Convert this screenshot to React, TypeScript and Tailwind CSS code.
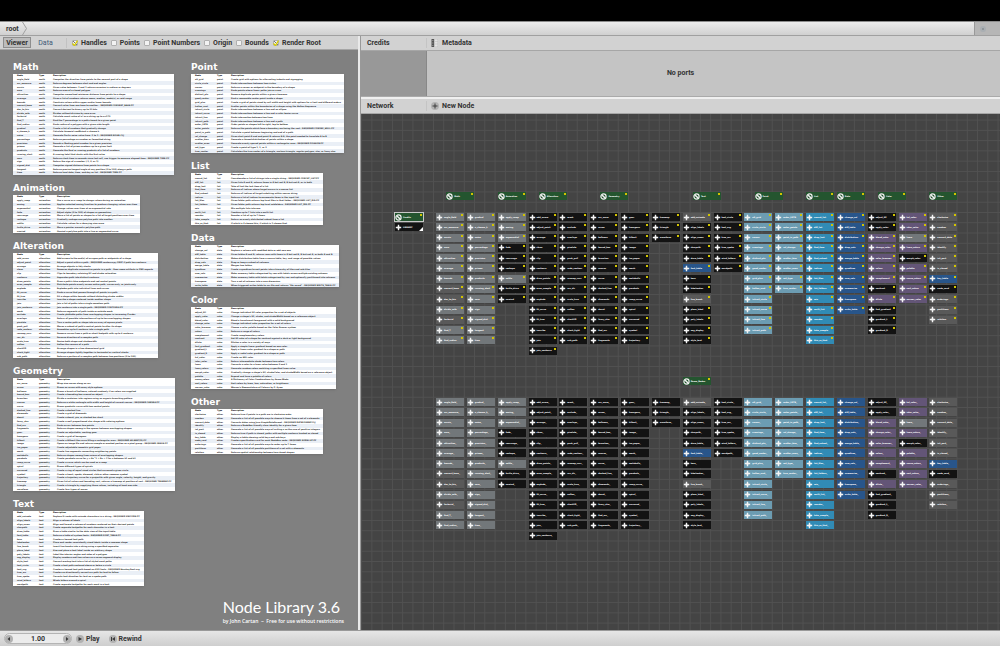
import type { ReactNode } from 'react'

type Tone = 'ash' | 'stone' | 'ink' | 'sky' | 'cyan' | 'navy' | 'plum' | 'green'
type Entry = [name: string, description: string, tone?: Tone]

interface Section {
  title: string
  type: string
  tone: Tone
  height: string
  width: string
  wideType?: boolean
  cell: number // grid cell of the green subnetwork header
  columns: number[] // how many nodes sit in each network column
  entries: Entry[]
}

const toneClass: Record<Tone, string> = {
  ash: 'bg-[#72777a]',
  stone: 'bg-[#595959]',
  ink: 'bg-[#131313]',
  sky: 'bg-[#6c9cb2]',
  cyan: 'bg-[#318bb5]',
  navy: 'bg-[#28558a]',
  plum: 'bg-[#635577]',
  green: 'bg-[#24552f]',
}

const leftSections: Section[] = [
  {
    title: 'Math', type: 'math', tone: 'ash', height: 'h-[101px]', width: 'w-[161px]', cell: 1, columns: [13, 13],
    entries: [
      ['angle_field', 'Computes the direction from points to the nearest part of a shape'],
      ['arc_measure', 'Returns degrees between start and end angles'],
      ['arcsin', 'Given value between -1 and 1 returns arcosine in radians or degrees'],
      ['area', 'Returns area of a closed polygon'],
      ['attraction', 'Computes normalized minimum distance from points to a shape'],
      ['average', 'Given a list of numbers returns mean, median, mode(s), or mid-range'],
      ['bounds', 'Constrain values within upper and/or lower bounds'],
      ['convert_base', 'Convert value from one base to another - REQUIRED CONVERT_BASE.PY', 'stone'],
      ['dec_to_bin', 'Convert decimal to binary up to 32 bits', 'stone'],
      ['divide_safe', 'Divides without division by zero error'],
      ['factorial', 'Calculate exact value of n! as a string up to n=170', 'stone'],
      ['find_T', 'Find the T percentage in a path closest to a given point'],
      ['find_radius', 'Finds radius of a polygon with a given side length'],
      ['gradual', 'Create a list of numbers that gradually change'],
      ['n_choose_k', 'Calculate binomial coefficient n choose k'],
      ['noise', 'Generate Perlin noise value from -1 to 1 - REQUIRED NOISE.CLJ'],
      ['percentage', 'Returns percentage as number or formatted string'],
      ['precision', 'Rounds a floating point number to a given precision'],
      ['primes', 'Generate a list of prime numbers up to a given limit'],
      ['products', 'Generate the final or running products of a list of numbers'],
      ['running_start', 'A running total that starts with the first value'],
      ['secs', 'Returns clock time in seconds since last call, use trigger to measure elapsed time - REQUIRED TIME.PY'],
      ['sign', 'Return the sign of a number (-1, 0, or 1)'],
      ['signed_dist', 'Computes signed distance from points to a shape'],
      ['tangent', 'Returns precise tangent angle at any position (0 to 100) along a path'],
      ['time', 'Returns local date, time, and day as list - REQUIRED TIME.PY'],
    ],
  },
  {
    title: 'Animation', type: 'animation', tone: 'ink', height: 'h-[38px]', width: 'w-[127px]', wideType: true, cell: 6, columns: [9],
    entries: [
      ['apply_ramp', 'Use a curve as a ramp to change values during an animation', 'ash'],
      ['easing', 'Applies selected easing function to produce changing values over time', 'ash'],
      ['exponential', 'Change values over time at an exponential rate', 'ash'],
      ['fade', 'Adjust alpha (0 to 100) of shapes or geometries'],
      ['rearrange', 'Move a list of points or shapes to a list of target positions over time'],
      ['reshape', 'Gradually reshape one polyline path into another'],
      ['settle', 'Calculate values for a decaying sine wave', 'ash'],
      ['turtle_drive', 'Move a pointer around a polyline path'],
      ['unwind', 'Unwind a polyline path into a line or segmented curve'],
    ],
  },
  {
    title: 'Alteration', type: 'alteration', tone: 'ink', height: 'h-[105px]', width: 'w-[145px]', wideType: true, cell: 10, columns: [14, 13],
    entries: [
      ['add_arrow', 'Add arrows to the end(s) of an open path or midpoints of a shape'],
      ['adjust_point', 'Adjust a point within a path - REQUIRED contours.py ONLY if path has contours'],
      ['arrange', 'Arrange objects in tidy stacks'],
      ['clean', 'Removes duplicate consecutive points in a path - fixes some artifacts in PNG exports'],
      ['clip', 'Clips to boundary retaining fill and stroke coloration'],
      ['contours', 'Separates path into distinct contours'],
      ['draw_points', "Draw a path's blue endpoints and red control points"],
      ['even_sample', 'Distribute points evenly across entire path, curves only, or joints only'],
      ['explode', 'Explodes path into individual lines and curves'],
      ['fit_curve', 'Finds a curve that passes through all points in a path'],
      ['fit_true', 'Fit a shape within bounds without distorting stroke widths'],
      ['inscribe', 'Inscribe a shape centered inside another shape'],
      ['join', 'Join a list of paths into a single seamless path'],
      ['join_contours', 'Join contours into a single path - REQUIRED CONTOURS.PY'],
      ['mask', 'Returns segments of path inside or outside mask'],
      ['occlude', 'Create plottable paths from overlapping shapes in increasing Z order'],
      ['overlaps', 'Return all possible intersections of up to ten overlapping shapes'],
      ['pixelate', 'Turn a vector path or shape into an array of square pixels'],
      ['push_pull', "Moves a subset of path's control points to alter its shape"],
      ['redo_contour', 'Assembles up to 6 contours into a single path'],
      ['resamp_curv', 'Remove curves from a path or short footpath with up to 6 contours'],
      ['rev_dir', 'Reverse direction of a complex path'],
      ['scale_true', 'Resize both shape and strokewidth'],
      ['soften', 'Soften the corners of a path'],
      ['stack2D', 'Arrange shapes in a two dimensional grid'],
      ['stack_tight', 'Arrange shapes tightly together in horizontal or vertical stacks'],
      ['sub_path', 'Returns a portion of a complex path between two positions (0 to 100)'],
    ],
  },
  {
    title: 'Geometry', type: 'geometry', tone: 'ink', height: 'h-[113px]', width: 'w-[162px]', wideType: true, cell: 16, columns: [13, 13, 3],
    entries: [
      ['arc_wave', 'Wrap sine waves along an arc'],
      ['arrow', 'Draws an arrow with many style options'],
      ['balloons', 'Draws a bunch of balloons, colored randomly if no colors are supplied'],
      ['bound_box', 'Create a bounding box around an object'],
      ['branches', 'Divide a container into regions using an organic branching pattern'],
      ['canvas', 'Returns a white rectangle with width and height of current canvas - REQUIRED CANVAS.PY'],
      ['curve', 'Draws quadratic curve with two control points'],
      ['dashed_line', 'Create a dashed line'],
      ['diamonds', 'Create a grid of diamonds'],
      ['donut', 'Create a donut, pie, or stacked bar chart'],
      ['fancy_star', 'Create a well proportioned star shape with coloring options'],
      ['find_arc', 'Finds an arc between two points'],
      ['fragments', 'Returns shapes among in the spaces between overlapping shapes'],
      ['gear', 'Create an adjustable, working gear'],
      ['hexagons', 'Create a grid of hexagons'],
      ['hilbert', 'Create a Hilbert-like curve filling a rectangular area - REQUIRED HILBERT(D).PY'],
      ['image', 'Opens an image file and returns sample or masked portion as a pixel group - REQUIRED IMAGE.PY'],
      ['iso_paper', 'Create adjustable isometric grid paper'],
      ['mesh', 'Create line segments connecting neighboring points'],
      ['metaballs', 'Returns shapes among from unions of overlapping shapes'],
      ['parabola', 'Create parabola curve for y = Ax^2 + Bx + C for x between h1 and h2'],
      ['ramp_curve', 'Create a curve which can be used as a ramp'],
      ['spiral', 'Draws different types of spirals'],
      ['surround', 'Create a ring of equal-sized circles that surround a given circle'],
      ['symbol', 'Create a heart, spade, diamond, club or other common symbol'],
      ['trajectory', 'Create a trajectory curve for a projectile with given angle, velocity, height, and gravity'],
      ['treemap', 'Given list of values and bounding rect, returns a treemap at position of rect - REQUIRED TREEMAP.PY'],
      ['triangle', 'Create a triangle by supplying three values, including at least one side'],
      ['waveform', 'Create four types of waves'],
    ],
  },
  {
    title: 'Text', type: 'text', tone: 'ink', height: 'h-[75px]', width: 'w-[131px]', cell: 25, columns: [13, 6],
    entries: [
      ['add_unicode', 'Replace U+code with unicode characters in a string - REQUIRED UNICODE.PY', 'stone'],
      ['align_labels', 'Align a column of labels'],
      ['align_nums', 'Align and format a column of numbers centered on their decimal points'],
      ['charpath', 'Create separate textpaths for each character in a text'],
      ['draw_table', 'Draw a table similar to the data view of the input table'],
      ['font_table', 'Returns a table of system fonts - REQUIRED FONT_TABLE.PY', 'navy'],
      ['kern', 'Creates a kerned text path'],
      ['labelmaker', 'Place and render consistently sized labels inside a common shape'],
      ['line_break', 'Insert line breaks into a string using a specified separator', 'stone'],
      ['place_label', 'Size and place a text label inside an arbitrary shape'],
      ['poly_labels', 'Label the interior angles and sides of a polygon'],
      ['seg_display', 'Display numbers and two values as a seven-segment display'],
      ['style_text', 'Convert markup text into a list of styled word paths'],
      ['text_circle', 'Create a text path centered above or below a circle'],
      ['text_svg', 'Creates a kerned text path based on SVG fonts - REQUIRED HersheyFont.svg'],
      ['true_arc', 'Creates an directionally correct arc path for text to follow'],
      ['true_spoke', 'Corrects text direction for text on a spoke path'],
      ['wind_letters', 'Winds letters around a spiral'],
      ['wordpath', 'Create separate textpaths for each word in a text'],
    ],
  },
]

const rightSections: Section[] = [
  {
    title: 'Point', type: 'point', tone: 'sky', height: 'h-[79px]', width: 'w-[153px]', cell: 31, columns: [12, 8],
    entries: [
      ['alt_grid', 'Create grid with options for alternating indents and zigzagging'],
      ['circle_circle', 'Finds intersections between two circles'],
      ['corner', 'Returns a corner or midpoint in the boundary of a shape'],
      ['crossings', 'Finds points where linear paths join or cross'],
      ['distinct_pts', 'Remove duplicate points within a given closeness'],
      ['good_center', 'Find a reasonable center point inside a shape'],
      ['grid_plus', 'Create a grid of points sized by cell width and height with options for a limit and different orders'],
      ['halton_scat', 'Scatter points within the boundaries of a shape using the Halton Sequence'],
      ['intrsct_circle', 'Finds intersections between a line and an ellipse'],
      ['intrsct_curve', 'Finds intersections between a line and a cubic bezier curve'],
      ['intrsct_line', 'Finds intersection between two lines'],
      ['intrsct_path', 'Finds intersections between a line and a path'],
      ['order_LRTB', 'Order points or shapes left to right, top to bottom'],
      ['outer_points', 'Returns the points which form a boundary enclosing the rest - REQUIRED CONVEX_HULL.PY'],
      ['point_in_path', 'Calculate a point between beginning and end of a path'],
      ['rel_change', 'Given start point A and end point B returns B-A, the point needed to translate A to B'],
      ['scatter_bias', 'Generate a biased distribution of points within a shape'],
      ['scatter_even', 'Generate evenly spaced points within a rectangular area - REQUIRED POISSON.PY'],
      ['set_type', 'Create a point of type 1, 2, or 3'],
      ['true_center', 'Calculates the true center of a triangle, nucleus triangle, regular polygon, star, or fancy star'],
    ],
  },
  {
    title: 'List', type: 'list', tone: 'cyan', height: 'h-[52px]', width: 'w-[132px]', cell: 36, columns: [13],
    entries: [
      ['concat_list', 'Concatenates a list of strings into a single string - REQUIRED CONCAT_LIST.PY'],
      ['diff_list', 'Given lists A and B, returns items in A but not B, B but not A, or in both'],
      ['drop_last', 'Take all but the last item of a list'],
      ['find_item', 'Returns all indices where target occurs in a source list'],
      ['find_subset', 'Returns all indices of target substring within source string'],
      ['indices', 'Returns a list of indices to enumerate items in the input list'],
      ['list_files', 'Given folder path returns top level files in that folder - REQUIRED LIST_DIR.PY'],
      ['list_folders', 'Given folder path returns top level subfolders - REQUIRED LIST_DIR.PY'],
      ['mix', 'Mix multiple lists into one'],
      ['multi_list', 'Combine up to 7 lists into a multi-list'],
      ['reorder', 'Reorder a list of up to 7 items'],
      ['take_sample', 'Return an evenly distributed subset from a list'],
      ['this_or_that', 'If which is 0 choose this, if which is 1 choose that'],
    ],
  },
  {
    title: 'Data', type: 'data', tone: 'navy', height: 'h-[42px]', width: 'w-[148px]', cell: 39, columns: [10],
    entries: [
      ['change_col', 'Replace a column with modified data or add new one'],
      ['diff_table', 'Given tables A and B, returns rows with items in A but not B, B but not A, or both A and B'],
      ['distribution', 'Makes distribution table from a source table, key, and range of possible values'],
      ['drop_cols', 'Drop or keep a subset of columns'],
      ['merge_table', 'Merges two tables'],
      ['quadtree', 'Create a quadtree to sort points into a hierarchy of tiles and sub-tiles'],
      ['sum_cols', 'Make summary table categorized by row with totals across multiple existing columns'],
      ['summarize', 'Make summary table with totals categorized by row and optionally partitioned into columns'],
      ['transpose', 'Turn a set of columns into a new dimension'],
      ['write_table', 'When triggered writes table to csv file and returns "file saved" - REQUIRED WRITE_TABLE.PY'],
    ],
  },
  {
    title: 'Color', type: 'color', tone: 'plum', height: 'h-[82px]', width: 'w-[145px]', cell: 43, columns: [12, 9],
    entries: [
      ['adjust_fill', 'Change individual fill color properties for a set of objects', 'ink'],
      ['apply_color', "Change a shape's fill, stroke, and strokeWidth based on a reference object", 'ink'],
      ['blend_color', 'Blend a translucent foreground with a solid background'],
      ['change_color', 'Change individual color properties for a set of colors'],
      ['color_browser', 'Choose a color palette based on the Color Brewer system'],
      ['colors', 'Returns a range of colors'],
      ['complement', 'Create complementary colors'],
      ['contrast', 'Set fill color of a shape for contrast against a dark or light background', 'ink'],
      ['dilute', 'Dilutes a color in a variety of ways'],
      ['fast_gradient', 'Apply a simple linear gradient based on one color', 'ink'],
      ['gradient_L', 'Apply a linear color gradient to a shape or path', 'ink'],
      ['gradient_R', 'Apply a radial color gradient to a shape or path', 'ink'],
      ['hsl_color', 'Create an HSL color'],
      ['inter_color', 'Return intermediate shade between two colors'],
      ['luma', 'Converts a color to a luma value between 0 and 1', 'ash'],
      ['luma_colors', 'Generate random colors matching a specified luma value'],
      ['morph_color', "Gradually change a shape's fill, strokeColor, and strokeWidth based on a reference object", 'ink'],
      ['palette', 'Expand and tune a palette of colors'],
      ['sanzo_colors', 'A Dictionary of Color Combinations by Sanzo Wada'],
      ['sort_colors', 'Sort colors by luma, hue, saturation, or brightness'],
      ['werner_color', "Werner's Nomenclature of Colours by P. Syme"],
    ],
  },
  {
    title: 'Other', type: 'other', tone: 'stone', height: 'h-[45px]', width: 'w-[132px]', cell: 48, columns: [11],
    entries: [
      ['clockwise', 'Returns true if points in a path are in clockwise order'],
      ['combos', 'Generate a list of all possible ways to choose k items from a set of n elements'],
      ['convert_date', 'Converts dates using Java SimpleDateFormat - REQUIRED DATEFORMAT.CLJ'],
      ['identify', 'Returns a NodeBox-friendly class identity for a given item'],
      ['int_part', 'Generate a list of all possible ways of writing n as the sum of positive integers'],
      ['is_closed', 'Returns true if path is closed, paths with multiple contours treated as closed'],
      ['key_table', 'Display a table showing valid keys and sub-keys', 'navy'],
      ['node_card', 'Creates specification card for each NodeBox node - REQUIRED NODELIST.PY', 'ink'],
      ['orderings', 'Generate a list of all possible ways to order up to 7 items'],
      ['partitions', 'Generate a list of all possible partitions of a set with n elements'],
      ['relation', 'Returns spatial relationship between two closed shapes'],
    ],
  },
]

// Size of one network grid cell at the current zoom level
const CELL = 185 / 18
const ORIGIN_X = 75
const ORIGIN_Y = 99

interface NodeSpec {
  name: string
  x: number
  y: number
  tone: Tone
  ported?: boolean
  selected?: boolean
  rendered?: boolean
}

function layoutNodes(): NodeSpec[] {
  const nodes: NodeSpec[] = [
    { name: 'Credits', x: -4, y: 0, tone: 'green', ported: true, selected: true },
    { name: 'LIBRARY', x: -4, y: 1, tone: 'ink', rendered: true },
    { name: 'Demo_Nodes', x: 24, y: 16, tone: 'green', ported: true },
  ]
  let column = 0
  for (const section of [...leftSections, ...rightSections]) {
    nodes.push({ name: section.title, x: section.cell, y: -2, tone: 'green', ported: true })
    let index = 0
    for (const count of section.columns) {
      for (let row = 0; row < count; row++) {
        const [name, , tone = section.tone] = section.entries[index++]
        nodes.push({ name, x: column * 3, y: row, tone, ported: true })
        nodes.push({ name: `${name}_`, x: column * 3, y: row + 18, tone })
      }
      column++
    }
  }
  return nodes
}

const nodes = layoutNodes()

function NodeIcon({ network }: { network: boolean }) {
  if (network) {
    return (
      <svg viewBox="0 0 14 14" className="h-[7px] w-[7px] shrink-0" fill="none" stroke="#f0f0f0" strokeWidth="2.4">
        <circle cx="7" cy="7" r="5.2" />
        <path d="M4 4l6 6" />
        <circle cx="7" cy="7" r="1.6" fill="#f0f0f0" stroke="none" />
      </svg>
    )
  }
  return (
    <svg viewBox="0 0 14 14" className="h-[7px] w-[7px] shrink-0" fill="#f4f4f4">
      <path d="M5.6 1.6h2.8v3l1 1h3v2.8h-3l-1 1v3H5.6v-3l-1-1h-3V5.6h3l1-1z" />
    </svg>
  )
}

function NetworkNode({ node }: { node: NodeSpec }) {
  return (
    <div
      className={`absolute flex h-[8px] w-[28px] items-center gap-px overflow-hidden ${toneClass[node.tone]} ${node.selected ? 'outline outline-[#c8c8c8]' : ''}`}
      style={{ left: ORIGIN_X + node.x * CELL, top: ORIGIN_Y + node.y * CELL }}
    >
      <NodeIcon network={node.tone === 'green'} />
      <span className="font-['DejaVu_Sans'] text-[2px] leading-[3px] font-bold whitespace-nowrap text-white">{node.name}</span>
      {node.ported && <i className="absolute top-px right-px h-[2px] w-[2px] bg-[#d2c400]" />}
      {node.rendered && (
        <svg viewBox="0 0 4 4" className="absolute right-0 bottom-0 h-[4px] w-[4px]" fill="#fff">
          <path d="M4 0v4H0z" />
        </svg>
      )}
    </div>
  )
}

function Card({ section }: { section: Section }) {
  const typeWidth = section.wideType ? 'w-[18px]' : 'w-[14px]'
  return (
    <section>
      <h2 className="flex h-[20px] items-center pt-[6px] text-[9px] leading-[12px] font-bold text-white">{section.title}</h2>
      <table className={`flex flex-col bg-white text-[2px] leading-[3px] font-bold text-[#333] shadow-sm ${section.height} ${section.width}`}>
        <thead className="contents">
          <tr className="flex flex-1 items-center pl-[4px] text-left text-black">
            <th className="w-[22px]">Node</th>
            <th className={typeWidth}>Type</th>
            <th>Description</th>
          </tr>
        </thead>
        <tbody className="contents">
          {section.entries.map(([name, description]) => (
            <tr key={name} className="flex flex-1 items-center pl-[4px] whitespace-nowrap even:bg-[#eaeff6]">
              <td className="w-[22px]">{name}</td>
              <td className={typeWidth}>{section.type}</td>
              <td>{description}</td>
            </tr>
          ))}
        </tbody>
      </table>
    </section>
  )
}

function Toggle({ label, checked }: { label: string; checked?: boolean }) {
  return (
    <label className="flex items-center gap-[3px]">
      <span className="relative flex h-[6px] w-[6px]">
        <input type="checkbox" defaultChecked={checked} className="peer h-[6px] w-[6px] appearance-none rounded-[1px] border border-[#b0b0b0] bg-[#f2f2f2]" />
        <svg viewBox="0 0 12 12" className="pointer-events-none absolute inset-0 hidden h-[6px] w-[6px] peer-checked:block" fill="none">
          <path d="M2 2l8 8" stroke="#777" strokeWidth="2" />
          <path d="M1 7l4 4 6-10" stroke="#d8cc00" strokeWidth="2.6" />
        </svg>
      </span>
      {label}
    </label>
  )
}

function PaneBar({ title, children }: { title: string; children: ReactNode }) {
  return (
    <header className="flex h-[15px] shrink-0 items-center border-b border-[#a6a6a6] bg-[#d2d2d2]">
      <h2 className="w-[66px] border-r border-[#c4c4c4] pl-[6px]">{title}</h2>
      {children}
    </header>
  )
}

function RoundIcon({ d }: { d: string }) {
  return (
    <svg viewBox="0 0 16 16" className="h-[8px] w-[8px] shrink-0">
      <circle cx="8" cy="8" r="8" fill="#b2b2b2" />
      <path d={d} fill="#3c3c3c" />
    </svg>
  )
}

export default function App() {
  return (
    <div className="flex min-h-screen flex-col bg-[#d2d2d2] font-['Roboto',sans-serif] text-[7px] leading-[10px] font-bold text-[#333]">
      <div className="h-[21px] bg-black" />
      <nav className="flex h-[15px] items-stretch border-t border-b border-t-[#8c8c8c] border-b-[#a0a0a0] bg-gradient-to-b from-[#ececec] to-[#d0d0d0]">
        <a href="#root" className="flex items-center pl-[6px]">root</a>
        <svg viewBox="0 0 5 13" className="ml-[3px] w-[5px]" fill="none" stroke="#a0a0a0">
          <path d="M.5 0l4 6.500-4 6.500" />
        </svg>
        <button aria-label="Stop" className="ml-auto flex w-[26px] items-center border-l border-[#999] bg-[#b6b6b6] pl-[5px]">
          <svg viewBox="0 0 12 12" className="h-[6px] w-[6px]">
            <circle cx="6" cy="6" r="6" fill="#a9aeb2" />
            <path d="M4 4h4v4H4z" fill="#8f9599" />
          </svg>
        </button>
      </nav>

      <main className="flex flex-1">
        {/* Viewer pane */}
        <div className="flex w-[36%] shrink-0 flex-col border-r-2 border-[#e9e9e9]">
          <header className="flex h-[14px] shrink-0 items-center border-b border-[#a6a6a6] bg-[#d2d2d2] pl-[3px]">
            <button className="h-[11px] w-[28px] border border-[#8e8e8e] bg-[#bcbcbc]">Viewer</button>
            <button className="ml-[7px] w-[15px] font-normal text-[#3f5a78]">Data</button>
            <form className="ml-[13px] flex items-center gap-[4px] border-l border-[#c2c2c2] pl-[5px]">
              <Toggle label="Handles" checked />
              <Toggle label="Points" />
              <Toggle label="Point Numbers" />
              <Toggle label="Origin" />
              <Toggle label="Bounds" />
              <Toggle label="Render Root" checked />
            </form>
          </header>
          <div className="flex flex-1 flex-col bg-[#808080] font-['DejaVu_Sans',sans-serif] font-normal">
            <div className="flex gap-[16px] pt-[4px] pl-[13px]">
              <div className="w-[162px]">
                {leftSections.map(section => <Card key={section.title} section={section} />)}
              </div>
              <div>
                {rightSections.map(section => <Card key={section.title} section={section} />)}
              </div>
            </div>
            <footer className="mt-auto mr-[14px] mb-[5px] self-end text-white">
              <h1 className="font-['Lato'] text-[16px] leading-[20px] font-normal">Node Library 3.6</h1>
              <p className="font-['Open_Sans'] text-[5px] leading-[8px] font-semibold">by John Cartan &nbsp;~&nbsp; Free for use without restrictions</p>
            </footer>
          </div>
        </div>

        <div className="flex min-w-0 flex-1 flex-col border-l border-[#999]">
          {/* Parameters pane */}
          <PaneBar title="Credits">
            <svg viewBox="0 0 14 16" className="ml-[4px] h-[8px] w-[7px]">
              <path d="M1 0h5v16H1z" fill="#555" />
              <path d="M7 0h7v16H7z" fill="#e4e4e4" stroke="#aaa" />
              <path d="M2 3h3M2 8h3M2 13h3M8 5h6M8 10h6" stroke="#bbb" />
            </svg>
            <button className="ml-[4px]">Metadata</button>
          </PaneBar>
          <div className="flex h-[45px] shrink-0 bg-[#c4c4c4]">
            <div className="w-[66px] border-r border-[#888] bg-[#989898]" />
            <p className="mt-[17px] flex-1 pr-[66px] text-center">No ports</p>
          </div>
          <div className="h-[3px] shrink-0 border-t border-[#aaa] bg-[#f0f0f0]" />

          {/* Network pane */}
          <PaneBar title="Network">
            <button className="ml-[4px] flex items-center gap-[3px]">
              <RoundIcon d="M7 3h2v4h4v2H9v4H7V9H3V7h4z" />
              New Node
            </button>
          </PaneBar>
          <div
            className="relative flex-1 overflow-hidden bg-[#444444] bg-[linear-gradient(to_right,#515151_1px,transparent_1px),linear-gradient(to_bottom,#515151_1px,transparent_1px)]"
            style={{ backgroundSize: `${CELL}px ${CELL}px`, backgroundPosition: `${ORIGIN_X - 3}px ${ORIGIN_Y - 1}px` }}
          >
            {nodes.map(node => <NetworkNode key={`${node.x}:${node.y}`} node={node} />)}
          </div>
        </div>
      </main>

      <footer className="flex h-[16px] items-center border-t border-[#999] bg-gradient-to-b from-[#e6e6e6] to-[#cecece] pl-[4px]">
        <div className="flex h-[11px] w-[68px] items-center justify-between rounded-full border border-[#b4b4b4] bg-[#ececec]">
          <button aria-label="Previous frame"><RoundIcon d="M10 4v8L5 8z" /></button>
          <input aria-label="Frame" defaultValue="1.00" className="w-[40px] bg-transparent text-center" />
          <button aria-label="Next frame"><RoundIcon d="M6 4v8l5-4z" /></button>
        </div>
        <button className="ml-[4px] flex items-center gap-[2px]">
          <RoundIcon d="M5 4v8l7-4z" />
          Play
        </button>
        <button className="ml-[9px] flex items-center gap-[2px]">
          <RoundIcon d="M4 4h2v8H4zM12 4v8L6 8z" />
          Rewind
        </button>
      </footer>
    </div>
  )
}
